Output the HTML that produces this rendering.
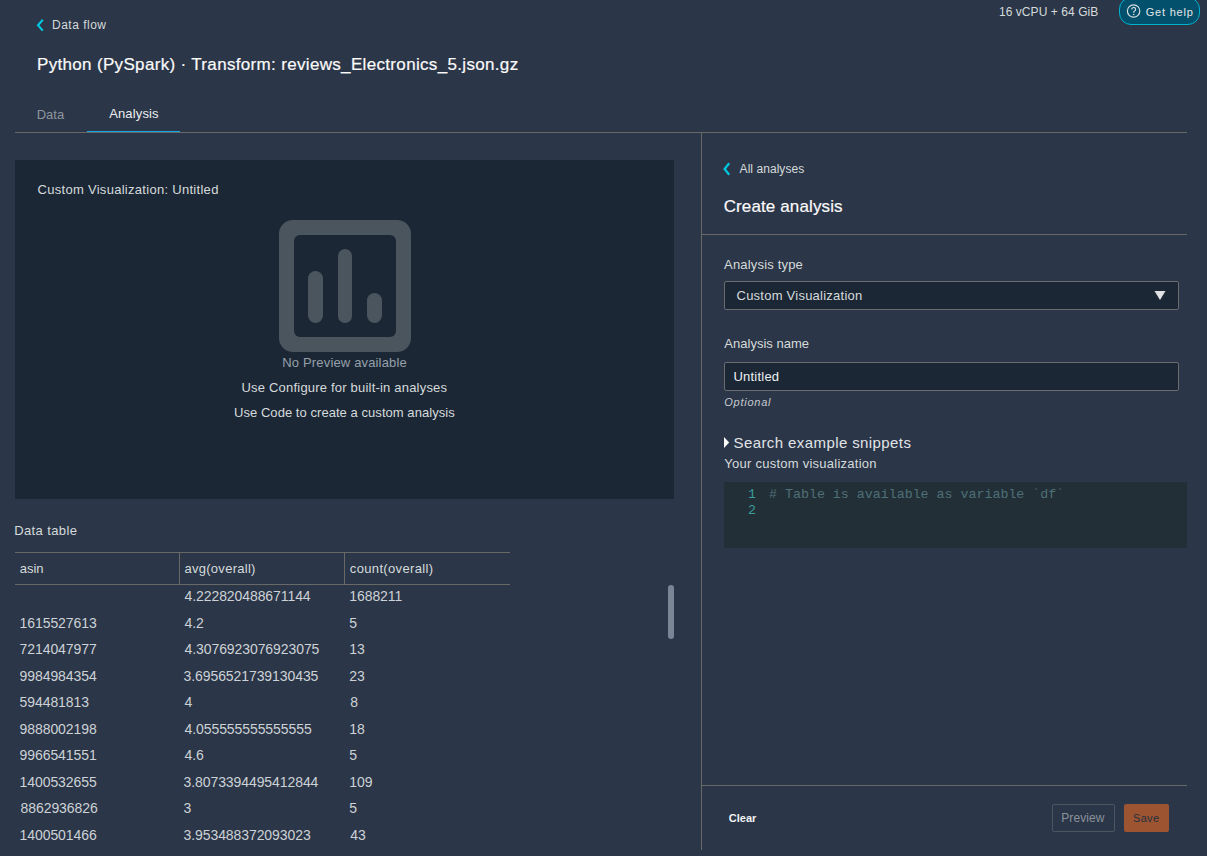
<!DOCTYPE html>
<html><head><meta charset="utf-8">
<style>
*{box-sizing:border-box;margin:0;padding:0}
html,body{width:1207px;height:856px;overflow:hidden;background:#2b3648;font-family:"Liberation Sans",sans-serif;color:#e9ebed}
.a{position:absolute;white-space:nowrap;line-height:normal}
.hl{position:absolute;height:1px;background:#686867}
.vl{position:absolute;width:1px;background:#686867}
.bar{position:absolute;border-radius:7.5px;background:#4a555e}
</style></head><body>
<!-- header -->
<svg class="a" style="left:35px;top:18px" width="12" height="14" viewBox="0 0 12 14"><path d="M7.8 1.8 L3 7.2 L7.8 12.6" fill="none" stroke="#00c8e0" stroke-width="2.1"/></svg>
<div class="a" style="left:87px;top:131px;width:93px;height:1px;background:#17a8e0"></div>
<div class="hl" style="left:15px;top:132px;width:1172px"></div>
<div class="a" style="left:1119px;top:-3px;width:81px;height:28px;border:1.5px solid #00b2cc;border-radius:12px;background:#03506c"></div>
<svg class="a" style="left:1126px;top:3px" width="16" height="16" viewBox="0 0 16 16"><circle cx="7.6" cy="8" r="6.2" fill="none" stroke="#d8dcdf" stroke-width="1.2"/><path d="M5.7 6.4a1.95 1.95 0 1 1 2.6 1.85c-.45.2-.6.5-.6 1v.55" fill="none" stroke="#d8dcdf" stroke-width="1.2"/><circle cx="7.7" cy="11.4" r=".75" fill="#d8dcdf"/></svg>

<!-- left panel -->
<div class="a" style="left:15px;top:160px;width:659px;height:339px;background:#1c2736"></div>
<div class="a" style="left:279px;top:220px;width:132px;height:132px;border-radius:14px;background:#4a555e"></div>
<div class="a" style="left:294px;top:235px;width:102px;height:102px;border-radius:6px;background:#1c2736"></div>
<div class="bar" style="left:308px;top:271px;width:15px;height:52px"></div>
<div class="bar" style="left:338px;top:249px;width:14px;height:74px"></div>
<div class="bar" style="left:367px;top:293px;width:15px;height:30px"></div>

<!-- data table -->
<div class="hl" style="left:15px;top:552px;width:495px"></div>
<div class="hl" style="left:15px;top:584px;width:495px"></div>
<div class="vl" style="left:179px;top:552px;height:32px"></div>
<div class="vl" style="left:344px;top:552px;height:32px"></div>
<div class="a" style="left:668px;top:585px;width:6px;height:54px;border-radius:3px;background:#7a8596"></div>

<!-- divider -->
<div class="vl" style="left:701px;top:132px;height:718px"></div>

<!-- right panel -->
<svg class="a" style="left:721px;top:162px" width="12" height="14" viewBox="0 0 12 14"><path d="M8.2 1.3 L3.6 7 L8.2 12.7" fill="none" stroke="#00c8e0" stroke-width="2.2"/></svg>
<div class="hl" style="left:701px;top:234px;width:486px"></div>
<div class="a" style="left:724px;top:281px;width:455px;height:29px;border:1px solid #6a6d70;border-radius:2px;background:#1c2736"></div>
<svg class="a" style="left:1153.5px;top:291px" width="12" height="10" viewBox="0 0 12 10"><path d="M0.5 0 L11.5 0 L6 9 Z" fill="#e0e2e4"/></svg>
<div class="a" style="left:724px;top:362px;width:455px;height:29px;border:1px solid #6a6d70;border-radius:2px;background:#1c2736"></div>
<svg class="a" style="left:724px;top:437px" width="6" height="12" viewBox="0 0 6 12"><path d="M0 0 L5.2 5.5 L0 11 Z" fill="#fafafa"/></svg>

<div class="a" style="left:724px;top:482px;width:463px;height:66px;background:#232f37"></div>
<div class="a" style="left:748px;top:487px;font-family:'Liberation Mono',monospace;font-size:13.3px;line-height:16px;color:#3a9c9c">1<br>2</div>
<div class="a" style="left:769px;top:487px;font-family:'Liberation Mono',monospace;font-size:13.3px;line-height:16px;color:#4e7078"># Table is available as variable `df`</div>

<div class="hl" style="left:701px;top:785px;width:486px"></div>
<div class="a" style="left:1052px;top:804px;width:63px;height:28px;border:1px solid #4d5560;border-radius:2px"></div>
<div class="a" style="left:1124px;top:804px;width:45px;height:28px;border-radius:2px;background:#9d5431"></div>
<div class="a" style="left:52.0px;top:18px;font-size:12px;color:#d5dbdb;letter-spacing:0.50px">Data flow</div>
<div class="a" style="left:37.0px;top:55px;font-size:17px;color:#fafafa;letter-spacing:0.33px;-webkit-text-stroke:0.2px #fafafa">Python (PySpark) · Transform: reviews_Electronics_5.json.gz</div>
<div class="a" style="left:36.7px;top:107px;font-size:13px;color:#8d969e">Data</div>
<div class="a" style="left:109.2px;top:106px;font-size:13px;color:#eceff1;letter-spacing:0.14px">Analysis</div>
<div class="a" style="left:998.9px;top:5px;font-size:12px;color:#d5dbdb;letter-spacing:0.07px">16 vCPU + 64 GiB</div>
<div class="a" style="left:1145.8px;top:6px;font-size:11px;color:#e3e6e8;letter-spacing:0.77px">Get help</div>
<div class="a" style="left:37.5px;top:182px;font-size:13px;color:#d5dbdb;letter-spacing:0.29px">Custom Visualization: Untitled</div>
<div class="a" style="left:282.3px;top:355px;font-size:13px;color:#95a0aa;letter-spacing:0.16px">No Preview available</div>
<div class="a" style="left:241.5px;top:380px;font-size:13px;color:#d5dbdb;letter-spacing:0.20px">Use Configure for built-in analyses</div>
<div class="a" style="left:234.0px;top:405px;font-size:13px;color:#d5dbdb;letter-spacing:0.05px">Use Code to create a custom analysis</div>
<div class="a" style="left:14.2px;top:523px;font-size:13px;color:#d5dbdb;letter-spacing:0.39px">Data table</div>
<div class="a" style="left:19.7px;top:561px;font-size:13px;color:#d5dbdb">asin</div>
<div class="a" style="left:184.5px;top:561px;font-size:13px;color:#d5dbdb;letter-spacing:0.27px">avg(overall)</div>
<div class="a" style="left:349.8px;top:561px;font-size:13px;color:#d5dbdb;letter-spacing:0.35px">count(overall)</div>
<div class="a" style="left:184.5px;top:588px;font-size:14px;color:#cdd2d6;letter-spacing:-0.08px">4.222820488671144</div>
<div class="a" style="left:349.3px;top:588px;font-size:14px;color:#cdd2d6;letter-spacing:-0.08px">1688211</div>
<div class="a" style="left:19.6px;top:615px;font-size:14px;color:#cdd2d6;letter-spacing:-0.08px">1615527613</div>
<div class="a" style="left:184.5px;top:615px;font-size:14px;color:#cdd2d6;letter-spacing:-0.08px">4.2</div>
<div class="a" style="left:349.3px;top:615px;font-size:14px;color:#cdd2d6;letter-spacing:-0.08px">5</div>
<div class="a" style="left:19.6px;top:641px;font-size:14px;color:#cdd2d6;letter-spacing:-0.08px">7214047977</div>
<div class="a" style="left:184.5px;top:641px;font-size:14px;color:#cdd2d6;letter-spacing:-0.08px">4.3076923076923075</div>
<div class="a" style="left:349.3px;top:641px;font-size:14px;color:#cdd2d6;letter-spacing:-0.08px">13</div>
<div class="a" style="left:19.6px;top:668px;font-size:14px;color:#cdd2d6;letter-spacing:-0.08px">9984984354</div>
<div class="a" style="left:183.5px;top:668px;font-size:14px;color:#cdd2d6;letter-spacing:-0.08px">3.6956521739130435</div>
<div class="a" style="left:349.3px;top:668px;font-size:14px;color:#cdd2d6;letter-spacing:-0.08px">23</div>
<div class="a" style="left:19.6px;top:694px;font-size:14px;color:#cdd2d6;letter-spacing:-0.08px">594481813</div>
<div class="a" style="left:184.5px;top:694px;font-size:14px;color:#cdd2d6;letter-spacing:-0.08px">4</div>
<div class="a" style="left:350.3px;top:694px;font-size:14px;color:#cdd2d6;letter-spacing:-0.08px">8</div>
<div class="a" style="left:19.6px;top:721px;font-size:14px;color:#cdd2d6;letter-spacing:-0.08px">9888002198</div>
<div class="a" style="left:184.5px;top:721px;font-size:14px;color:#cdd2d6;letter-spacing:-0.08px">4.055555555555555</div>
<div class="a" style="left:349.3px;top:721px;font-size:14px;color:#cdd2d6;letter-spacing:-0.08px">18</div>
<div class="a" style="left:19.6px;top:747px;font-size:14px;color:#cdd2d6;letter-spacing:-0.08px">9966541551</div>
<div class="a" style="left:184.5px;top:747px;font-size:14px;color:#cdd2d6;letter-spacing:-0.08px">4.6</div>
<div class="a" style="left:349.3px;top:747px;font-size:14px;color:#cdd2d6;letter-spacing:-0.08px">5</div>
<div class="a" style="left:19.6px;top:774px;font-size:14px;color:#cdd2d6;letter-spacing:-0.08px">1400532655</div>
<div class="a" style="left:183.5px;top:774px;font-size:14px;color:#cdd2d6;letter-spacing:-0.08px">3.8073394495412844</div>
<div class="a" style="left:349.3px;top:774px;font-size:14px;color:#cdd2d6;letter-spacing:-0.08px">109</div>
<div class="a" style="left:20.6px;top:800px;font-size:14px;color:#cdd2d6;letter-spacing:-0.08px">8862936826</div>
<div class="a" style="left:183.5px;top:800px;font-size:14px;color:#cdd2d6;letter-spacing:-0.08px">3</div>
<div class="a" style="left:349.3px;top:800px;font-size:14px;color:#cdd2d6;letter-spacing:-0.08px">5</div>
<div class="a" style="left:19.6px;top:827px;font-size:14px;color:#cdd2d6;letter-spacing:-0.08px">1400501466</div>
<div class="a" style="left:183.5px;top:827px;font-size:14px;color:#cdd2d6;letter-spacing:-0.08px">3.953488372093023</div>
<div class="a" style="left:350.3px;top:827px;font-size:14px;color:#cdd2d6;letter-spacing:-0.08px">43</div>
<div class="a" style="left:739.6px;top:162px;font-size:12px;color:#d5dbdb;letter-spacing:0.05px">All analyses</div>
<div class="a" style="left:723.7px;top:197px;font-size:17px;color:#fafafa;letter-spacing:0.12px;-webkit-text-stroke:0.2px #fafafa">Create analysis</div>
<div class="a" style="left:724.1px;top:257px;font-size:13px;color:#d5dbdb;letter-spacing:0.18px">Analysis type</div>
<div class="a" style="left:736.5px;top:288px;font-size:13px;color:#d5dbdb;letter-spacing:0.24px">Custom Visualization</div>
<div class="a" style="left:724.3px;top:336px;font-size:13px;color:#d5dbdb;letter-spacing:0.02px">Analysis name</div>
<div class="a" style="left:733.5px;top:369px;font-size:13px;color:#eceff1;letter-spacing:0.21px">Untitled</div>
<div class="a" style="left:724.3px;top:396px;font-size:11px;color:#c6cacf;letter-spacing:0.74px;font-style:italic">Optional</div>
<div class="a" style="left:733.5px;top:434px;font-size:15px;color:#e1e4e7;letter-spacing:0.41px">Search example snippets</div>
<div class="a" style="left:724.3px;top:456px;font-size:13px;color:#d5dbdb;letter-spacing:0.25px">Your custom visualization</div>
<div class="a" style="left:728.7px;top:812px;font-size:11px;color:#f2f3f4;letter-spacing:0.05px;font-weight:bold">Clear</div>
<div class="a" style="left:1061.3px;top:811px;font-size:12px;color:#8a9299;letter-spacing:0.07px">Preview</div>
<div class="a" style="left:1133.0px;top:812px;font-size:11px;color:#243040;letter-spacing:0.33px">Save</div>
</body></html>
